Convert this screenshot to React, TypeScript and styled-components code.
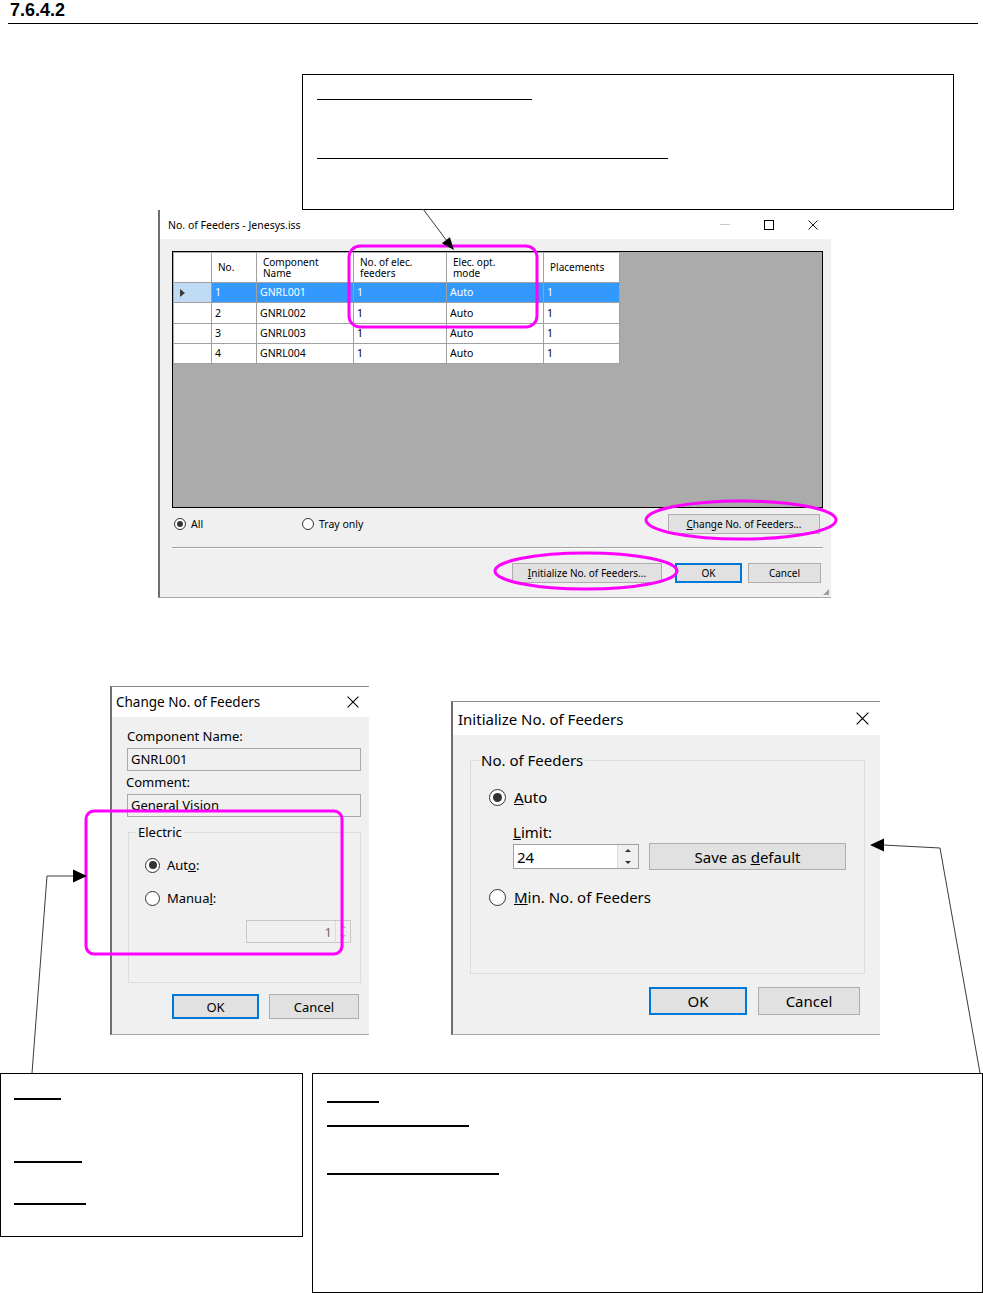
import React from "react";
import styled, { createGlobalStyle } from "styled-components";

const GlobalStyle = createGlobalStyle`
  body {
    margin: 0;
    background: #fff;
    font-family: "Noto Sans", "Liberation Sans", sans-serif;
    color: #000;
  }
`;

const Page = styled.div`
  position: relative;
  width: 983px;
  height: 1293px;
  overflow: hidden;
`;

const SectionHeader = styled.div`
  margin: 0 5px 0 8px;
  height: 23px;
  border-bottom: 1px solid #000;
  padding-left: 2px;
  font: bold 18px/20px "Liberation Sans", Arial, sans-serif;
`;

const Callout = styled.div<{ $w: number; $h: number; $ml: number; $pt: number; $pl: number }>`
  box-sizing: border-box;
  width: ${(p) => p.$w}px;
  height: ${(p) => p.$h}px;
  margin-left: ${(p) => p.$ml}px;
  padding: ${(p) => p.$pt}px 0 0 ${(p) => p.$pl}px;
  border: 1px solid #000;
  background: #fff;
  display: flex;
  flex-direction: column;
  align-items: flex-start;
`;

const Bar = styled.div<{ $w: number; $mt?: number; $thick?: number }>`
  width: ${(p) => p.$w}px;
  height: ${(p) => p.$thick ?? 1}px;
  margin-top: ${(p) => p.$mt ?? 0}px;
  background: #000;
`;

const TopCallout = styled(Callout)`
  margin-top: 50px;
`;

const BottomRow = styled.div`
  display: flex;
  align-items: flex-start;
  margin-top: 38px;
`;

const DialogRow = styled.div`
  display: flex;
  align-items: flex-start;
  margin-top: 88px;
`;

const Window = styled.div<{ $w: number; $h: number; $ml: number; $mt?: number }>`
  position: relative;
  box-sizing: border-box;
  width: ${(p) => p.$w}px;
  height: ${(p) => p.$h}px;
  margin-left: ${(p) => p.$ml}px;
  margin-top: ${(p) => p.$mt ?? 0}px;
  background: #f0f0f0;
  border-left: 2px solid #6e6e6e;
  border-top: 1px solid #8c8c8c;
  border-bottom: 1px solid #a8a8a8;
  display: flex;
  flex-direction: column;
`;

const MainWindow = styled(Window)`
  border-top: none;
`;

const TitleBar = styled.div<{ $h: number; $size: number; $pl: number }>`
  height: ${(p) => p.$h}px;
  background: #fff;
  display: flex;
  align-items: center;
  padding-left: ${(p) => p.$pl}px;
  font-size: ${(p) => p.$size}px;
  flex-shrink: 0;
`;

const Controls = styled.div<{ $pr: number; $gap: number }>`
  margin-left: auto;
  padding-right: ${(p) => p.$pr}px;
  display: flex;
  align-items: center;
  gap: ${(p) => p.$gap}px;
`;

const MinIcon = styled.span`
  width: 10px;
  height: 1px;
  background: #c8c8c8;
`;

const MaxIcon = styled.span`
  box-sizing: border-box;
  width: 10px;
  height: 10px;
  border: 1px solid #000;
`;

const CloseIcon = ({ size }: { size: number }) => (
  <svg width={size} height={size} viewBox="0 0 10 10">
    <path d="M0.5 0.5 L9.5 9.5 M9.5 0.5 L0.5 9.5" stroke="#000" strokeWidth="0.9" fill="none" />
  </svg>
);

const Client = styled.div<{ $pl: number; $pr?: number }>`
  display: flex;
  flex-direction: column;
  align-items: flex-start;
  padding-left: ${(p) => p.$pl}px;
  padding-right: ${(p) => p.$pr ?? 0}px;
  flex: 1;
`;

/* ---- grid view ---- */

const GridView = styled.div`
  box-sizing: border-box;
  margin-top: 12px;
  width: 651px;
  height: 257px;
  border: 1px solid #000;
  background: #ababab;
  padding: 1px;
`;

const GridTable = styled.div`
  display: grid;
  grid-template-columns: 38px 45px 97px 93px 97px 76px;
  grid-template-rows: 30px 20px 21px 20px 20px;
  width: 446px;
`;

const Cell = styled.div<{ $head?: boolean; $sel?: boolean; $rowHead?: boolean }>`
  box-sizing: border-box;
  border-right: 1px solid #a0a0a0;
  border-bottom: 1px solid #a0a0a0;
  background: ${(p) => (p.$sel ? (p.$rowHead ? "#bfdcf4" : "#3399ff") : "#fff")};
  color: ${(p) => (p.$sel && !p.$rowHead ? "#fff" : "#000")};
  font-size: ${(p) => (p.$head ? 10 : 10.5)}px;
  line-height: ${(p) => (p.$head ? 11 : 19)}px;
  padding: ${(p) => (p.$head ? "0 6px" : "0 3px")};
  display: flex;
  align-items: center;
  white-space: pre;
  overflow: hidden;
`;

const RowArrow = styled.span`
  width: 0;
  height: 0;
  margin-left: 3px;
  border-top: 4px solid transparent;
  border-bottom: 4px solid transparent;
  border-left: 5px solid #3a3a3a;
`;

/* ---- controls ---- */

const OptionsRow = styled.div`
  display: flex;
  align-items: center;
  width: 651px;
  margin-top: 6px;
  height: 20px;
`;

const RadioItem = styled.label<{ $w?: number; $size: number; $gap: number; $ml?: number }>`
  display: flex;
  align-items: center;
  gap: ${(p) => p.$gap}px;
  width: ${(p) => (p.$w ? `${p.$w}px` : "auto")};
  margin-left: ${(p) => p.$ml ?? 0}px;
  font-size: ${(p) => p.$size}px;
  white-space: nowrap;
`;

const RadioDot = styled.span<{ $checked?: boolean; $d: number }>`
  box-sizing: border-box;
  width: ${(p) => p.$d}px;
  height: ${(p) => p.$d}px;
  border-radius: 50%;
  border: 1px solid #333;
  background: #fff;
  display: inline-flex;
  align-items: center;
  justify-content: center;
  flex-shrink: 0;
  &::after {
    content: "";
    display: ${(p) => (p.$checked ? "block" : "none")};
    width: ${(p) => Math.round(p.$d * 0.5)}px;
    height: ${(p) => Math.round(p.$d * 0.5)}px;
    border-radius: 50%;
    background: #333;
  }
`;

const WinButton = styled.div<{ $w: number; $h: number; $size: number; $default?: boolean }>`
  box-sizing: border-box;
  width: ${(p) => p.$w}px;
  height: ${(p) => p.$h}px;
  background: #e1e1e1;
  border: ${(p) => (p.$default ? "2px solid #0078d7" : "1px solid #adadad")};
  display: flex;
  align-items: center;
  justify-content: center;
  font-size: ${(p) => p.$size}px;
  white-space: nowrap;
  flex-shrink: 0;
`;

const PushRight = styled(WinButton)`
  margin-left: auto;
  margin-right: 3px;
`;

const Separator = styled.div`
  width: 651px;
  margin-top: 13px;
  border-top: 1px solid #a0a0a0;
  border-bottom: 1px solid #fff;
`;

const ButtonRow = styled.div<{ $mt: number; $gap: number; $pr: number }>`
  align-self: stretch;
  display: flex;
  justify-content: flex-end;
  gap: ${(p) => p.$gap}px;
  margin-top: ${(p) => p.$mt}px;
  padding-right: ${(p) => p.$pr}px;
`;

const Grip = styled.div`
  position: absolute;
  right: 2px;
  bottom: 2px;
  width: 6px;
  height: 6px;
  background-image: radial-gradient(#a0a0a0 0.8px, transparent 1px);
  background-size: 2px 2px;
  clip-path: polygon(100% 0, 100% 100%, 0 100%);
`;

const FieldLabel = styled.div<{ $mt: number; $ml?: number; $size?: number }>`
  margin-top: ${(p) => p.$mt}px;
  margin-left: ${(p) => p.$ml ?? 0}px;
  font-size: ${(p) => p.$size ?? 13}px;
  line-height: ${(p) => (p.$size ?? 13) + 3}px;
`;

const TextBox = styled.div`
  box-sizing: border-box;
  width: 234px;
  height: 23px;
  margin-top: 4px;
  border: 1px solid #a8a8a8;
  background: #f0f0f0;
  padding: 0 3px;
  font-size: 13px;
  line-height: 21px;
`;

const GroupBox = styled.fieldset<{
  $w: number;
  $h: number;
  $mt: number;
  $ml?: number;
  $size: number;
  $pl: number;
  $pr: number;
  $lx: number;
}>`
  box-sizing: border-box;
  width: ${(p) => p.$w}px;
  height: ${(p) => p.$h}px;
  margin: ${(p) => p.$mt}px 0 0 ${(p) => p.$ml ?? 0}px;
  padding: 0 ${(p) => p.$pr}px 0 ${(p) => p.$pl}px;
  border: 1px solid #dcdcdc;
  min-width: 0;
  display: flex;
  flex-direction: column;
  font-size: ${(p) => p.$size}px;
  legend {
    padding: 0 2px;
    margin-left: ${(p) => p.$lx - p.$pl - 3}px;
    line-height: ${(p) => p.$size + 3}px;
  }
`;

const Row = styled.div<{ $mt: number; $h: number; $ml?: number; $end?: boolean }>`
  display: flex;
  align-items: center;
  align-self: ${(p) => (p.$end ? "flex-end" : "flex-start")};
  margin-top: ${(p) => p.$mt}px;
  margin-left: ${(p) => p.$ml ?? 0}px;
  height: ${(p) => p.$h}px;
  gap: 10px;
`;

const SpinBox = styled.div<{ $w: number; $h: number; $disabled?: boolean }>`
  box-sizing: border-box;
  width: ${(p) => p.$w}px;
  height: ${(p) => p.$h}px;
  border: 1px solid ${(p) => (p.$disabled ? "#c8c8c8" : "#a0a0a0")};
  background: ${(p) => (p.$disabled ? "#f0f0f0" : "#fff")};
  color: ${(p) => (p.$disabled ? "#6d6d6d" : "#000")};
  display: flex;
  align-items: stretch;
`;

const SpinValue = styled.div<{ $right?: boolean; $size: number }>`
  flex: 1;
  display: flex;
  align-items: center;
  justify-content: ${(p) => (p.$right ? "flex-end" : "flex-start")};
  padding: 0 3px;
  font-size: ${(p) => p.$size}px;
`;

const SpinButtons = styled.div<{ $w: number }>`
  width: ${(p) => p.$w}px;
  display: flex;
  flex-direction: column;
  border-left: 1px solid #dcdcdc;
  background: #f0f0f0;
`;

const SpinHalf = styled.div<{ $up?: boolean; $c: string }>`
  flex: 1;
  display: flex;
  align-items: center;
  justify-content: center;
  &::after {
    content: "";
    border-left: 3px solid transparent;
    border-right: 3px solid transparent;
    ${(p) => (p.$up ? `border-bottom: 3px solid ${p.$c};` : `border-top: 3px solid ${p.$c};`)}
  }
`;

const Overlay = styled.svg`
  position: absolute;
  left: 0;
  top: 0;
  pointer-events: none;
`;

const headers = [
  "",
  "No.",
  "Component\nName",
  "No. of elec.\nfeeders",
  "Elec. opt.\nmode",
  "Placements",
];

const rows = [
  ["1", "GNRL001", "1", "Auto", "1"],
  ["2", "GNRL002", "1", "Auto", "1"],
  ["3", "GNRL003", "1", "Auto", "1"],
  ["4", "GNRL004", "1", "Auto", "1"],
];

const Spinner = ({ w, c }: { w: number; c: string }) => (
  <SpinButtons $w={w}>
    <SpinHalf $up $c={c} />
    <SpinHalf $c={c} />
  </SpinButtons>
);

const App: React.FunctionComponent = () => {
  return (
    <Page>
      <GlobalStyle />
      <SectionHeader>7.6.4.2</SectionHeader>

      <TopCallout $w={652} $h={136} $ml={302} $pt={24} $pl={14}>
        <Bar $w={215} />
        <Bar $w={351} $mt={58} />
      </TopCallout>

      <MainWindow $w={673} $h={388} $ml={158}>
        <TitleBar $h={29} $size={10.5} $pl={8}>
          No. of Feeders - Jenesys.iss
          <Controls $pr={13} $gap={34}>
            <MinIcon />
            <MaxIcon />
            <CloseIcon size={10} />
          </Controls>
        </TitleBar>
        <Client $pl={12}>
          <GridView>
            <GridTable>
              {headers.map((h, i) => (
                <Cell key={`h${i}`} $head>
                  {h}
                </Cell>
              ))}
              {rows.map((r, ri) => (
                <React.Fragment key={ri}>
                  <Cell $sel={ri === 0} $rowHead>
                    {ri === 0 && <RowArrow />}
                  </Cell>
                  {r.map((v, ci) => (
                    <Cell key={ci} $sel={ri === 0}>
                      {v}
                    </Cell>
                  ))}
                </React.Fragment>
              ))}
            </GridTable>
          </GridView>
          <OptionsRow>
            <RadioItem $w={128} $size={10.5} $gap={5} $ml={2}>
              <RadioDot $d={12} $checked />
              All
            </RadioItem>
            <RadioItem $size={10.5} $gap={5}>
              <RadioDot $d={12} />
              Tray only
            </RadioItem>
            <PushRight $w={152} $h={20} $size={10}>
              <u>C</u>hange No. of Feeders...
            </PushRight>
          </OptionsRow>
          <Separator />
          <ButtonRow $mt={14} $gap={6} $pr={10}>
            <WinButton $w={150} $h={20} $size={10} style={{ marginRight: 7 }}>
              <u>I</u>nitialize No. of Feeders...
            </WinButton>
            <WinButton $w={67} $h={20} $size={10} $default>
              OK
            </WinButton>
            <WinButton $w={73} $h={20} $size={10}>
              Cancel
            </WinButton>
          </ButtonRow>
        </Client>
        <Grip />
      </MainWindow>

      <DialogRow>
        <Window $w={259} $h={349} $ml={110}>
          <TitleBar $h={30} $size={13.5} $pl={4}>
            Change No. of Feeders
            <Controls $pr={10} $gap={0}>
              <CloseIcon size={12} />
            </Controls>
          </TitleBar>
          <Client $pl={15}>
            <FieldLabel $mt={11}>Component Name:</FieldLabel>
            <TextBox>GNRL001</TextBox>
            <FieldLabel $mt={3} $ml={-1}>
              Comment:
            </FieldLabel>
            <TextBox>General Vision</TextBox>
            <GroupBox $w={233} $h={159} $mt={7} $ml={1} $size={13} $pl={16} $pr={9} $lx={10}>
              <legend>Electric</legend>
              <Row $mt={16} $h={18}>
                <RadioItem $size={13} $gap={7}>
                  <RadioDot $d={15} $checked />
                  <span>
                    Aut<u>o</u>:
                  </span>
                </RadioItem>
              </Row>
              <Row $mt={15} $h={18}>
                <RadioItem $size={13} $gap={7}>
                  <RadioDot $d={15} />
                  <span>
                    Manua<u>l</u>:
                  </span>
                </RadioItem>
              </Row>
              <Row $mt={13} $h={23} $end>
                <SpinBox $w={105} $h={23} $disabled>
                  <SpinValue $right $size={13}>
                    1
                  </SpinValue>
                  <Spinner w={14} c="#b0b0b0" />
                </SpinBox>
              </Row>
            </GroupBox>
            <ButtonRow $mt={11} $gap={10} $pr={10}>
              <WinButton $w={87} $h={25} $size={13} $default>
                OK
              </WinButton>
              <WinButton $w={90} $h={25} $size={13}>
                Cancel
              </WinButton>
            </ButtonRow>
          </Client>
        </Window>

        <Window $w={429} $h={334} $ml={82} $mt={15}>
          <TitleBar $h={33} $size={15} $pl={5}>
            Initialize No. of Feeders
            <Controls $pr={11} $gap={0}>
              <CloseIcon size={13} />
            </Controls>
          </TitleBar>
          <Client $pl={17}>
            <GroupBox $w={395} $h={223} $mt={16} $size={15} $pl={18} $pr={18} $lx={11}>
              <legend>No. of Feeders</legend>
              <Row $mt={18} $h={20}>
                <RadioItem $size={15} $gap={8}>
                  <RadioDot $d={17} $checked />
                  <span>
                    <u>A</u>uto
                  </span>
                </RadioItem>
              </Row>
              <FieldLabel $mt={16} $ml={24} $size={15}>
                <u>L</u>imit:
              </FieldLabel>
              <Row $mt={2} $h={27} $ml={24}>
                <SpinBox $w={126} $h={25}>
                  <SpinValue $size={15}>24</SpinValue>
                  <Spinner w={20} c="#333" />
                </SpinBox>
                <WinButton $w={197} $h={27} $size={15}>
                  Save as&nbsp;<u>d</u>efault
                </WinButton>
              </Row>
              <Row $mt={17} $h={20}>
                <RadioItem $size={15} $gap={8}>
                  <RadioDot $d={17} />
                  <span>
                    <u>M</u>in. No. of Feeders
                  </span>
                </RadioItem>
              </Row>
            </GroupBox>
            <ButtonRow $mt={13} $gap={11} $pr={20}>
              <WinButton $w={98} $h={28} $size={15} $default>
                OK
              </WinButton>
              <WinButton $w={102} $h={28} $size={15}>
                Cancel
              </WinButton>
            </ButtonRow>
          </Client>
        </Window>
      </DialogRow>

      <BottomRow>
        <Callout $w={303} $h={164} $ml={0} $pt={24} $pl={13}>
          <Bar $w={47} $thick={2} />
          <Bar $w={68} $mt={61} $thick={2} />
          <Bar $w={72} $mt={40} $thick={2} />
        </Callout>
        <Callout $w={671} $h={220} $ml={9} $pt={27} $pl={14}>
          <Bar $w={52} $thick={2} />
          <Bar $w={142} $mt={22} $thick={2} />
          <Bar $w={172} $mt={46} $thick={2} />
        </Callout>
      </BottomRow>

      <Overlay width={983} height={1293} viewBox="0 0 983 1293">
        <g stroke="#ff00ff" strokeWidth={3} fill="none">
          <rect x={349} y={246} width={188} height={81} rx={11} />
          <ellipse cx={741} cy={520} rx={95} ry={19} />
          <ellipse cx={586} cy={571} rx={91} ry={18} />
          <rect x={86} y={811} width={256} height={143} rx={8} />
        </g>
        <g stroke="#3a3a3a" strokeWidth={1} fill="none">
          <line x1={423} y1={209} x2={447} y2={241} />
          <polyline points="32,1073 47,876 74,876" />
          <polyline points="980,1073 940,848 883,845" />
        </g>
        <g fill="#000">
          <polygon points="454,250 441.9,243.3 449.9,237.3" />
          <polygon points="87,876 73,869.5 73,882.5" />
          <polygon points="870,845 884,838.5 884,851.5" />
        </g>
      </Overlay>
    </Page>
  );
};

export default App;
